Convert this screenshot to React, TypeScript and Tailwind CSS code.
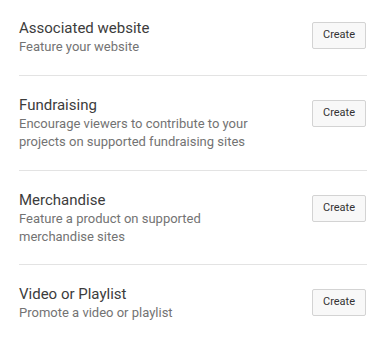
import React from "react";

const items = [
  { title: "Associated website", desc: "Feature your website", row: "pt-[18px] pb-[19px] border-b", btn: "mt-[4px]" },
  { title: "Fundraising", desc: "Encourage viewers to contribute to your projects on supported fundraising sites", row: "pt-[19px] pb-[19px] border-b", btn: "mt-[5px]" },
  { title: "Merchandise", desc: "Feature a product on supported merchandise sites", row: "pt-[19px] pb-[18px] border-b", btn: "mt-[5px]" },
  { title: "Video or Playlist", desc: "Promote a video or playlist", row: "pt-[19px] pb-[19px]", btn: "mt-[5px]" },
];

export default function App() {
  return (
    <div className="w-[383px] h-[339px] bg-white" style={{ fontFamily: "Roboto, 'Liberation Sans', sans-serif" }}>
      <div className="ml-[19px] w-[348px]">
        {items.map((it) => (
          <div key={it.title} className={`flex items-start justify-between border-[#e3e3e3] ${it.row}`}>
            <div className="max-w-[252px]">
              <div className="text-[15px] leading-[20px] text-[#3c3c3c]">{it.title}</div>
              <div className="text-[13px] leading-[18px] text-[#737373]">{it.desc}</div>
            </div>
            <button className={`${it.btn} mr-[1px] h-[27px] w-[54px] rounded-[2px] border border-[#d3d3d3] bg-[#f8f8f8] text-[11px] text-[#333333]`}>
              Create
            </button>
          </div>
        ))}
      </div>
    </div>
  );
}
